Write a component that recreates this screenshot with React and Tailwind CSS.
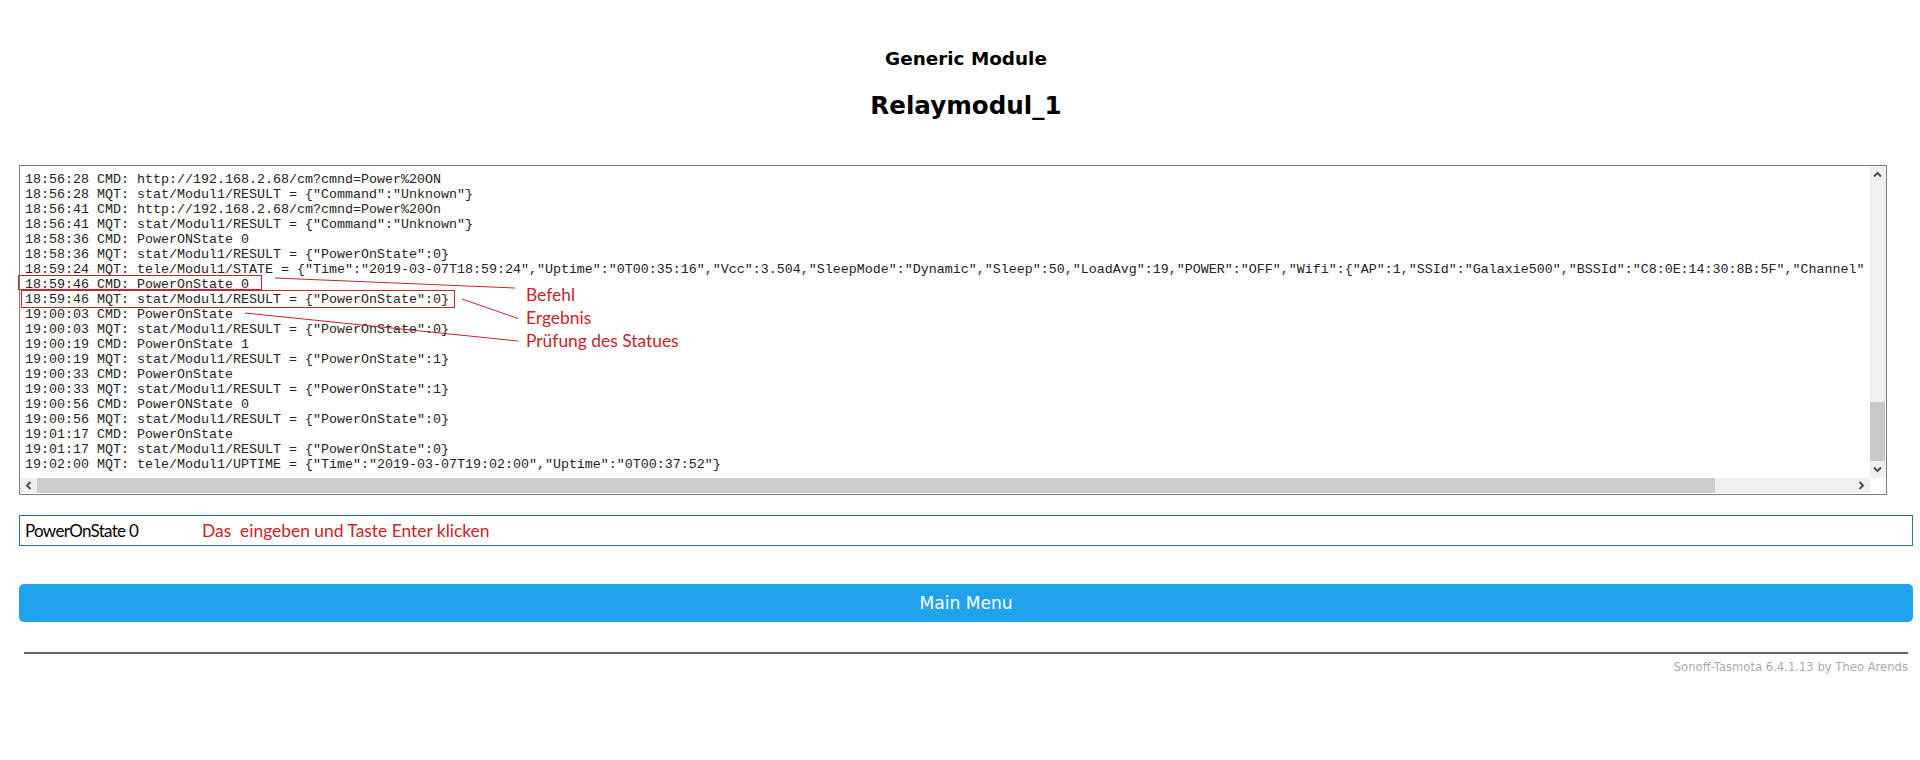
const lines = [
  '18:56:28 CMD: http://192.168.2.68/cm?cmnd=Power%20ON',
  '18:56:28 MQT: stat/Modul1/RESULT = {"Command":"Unknown"}',
  '18:56:41 CMD: http://192.168.2.68/cm?cmnd=Power%20On',
  '18:56:41 MQT: stat/Modul1/RESULT = {"Command":"Unknown"}',
  '18:58:36 CMD: PowerONState 0',
  '18:58:36 MQT: stat/Modul1/RESULT = {"PowerOnState":0}',
  '18:59:24 MQT: tele/Modul1/STATE = {"Time":"2019-03-07T18:59:24","Uptime":"0T00:35:16","Vcc":3.504,"SleepMode":"Dynamic","Sleep":50,"LoadAvg":19,"POWER":"OFF","Wifi":{"AP":1,"SSId":"Galaxie500","BSSId":"C8:0E:14:30:8B:5F","Channel"',
  '18:59:46 CMD: PowerOnState 0',
  '18:59:46 MQT: stat/Modul1/RESULT = {"PowerOnState":0}',
  '19:00:03 CMD: PowerOnState',
  '19:00:03 MQT: stat/Modul1/RESULT = {"PowerOnState":0}',
  '19:00:19 CMD: PowerOnState 1',
  '19:00:19 MQT: stat/Modul1/RESULT = {"PowerOnState":1}',
  '19:00:33 CMD: PowerOnState',
  '19:00:33 MQT: stat/Modul1/RESULT = {"PowerOnState":1}',
  '19:00:56 CMD: PowerONState 0',
  '19:00:56 MQT: stat/Modul1/RESULT = {"PowerOnState":0}',
  '19:01:17 CMD: PowerOnState',
  '19:01:17 MQT: stat/Modul1/RESULT = {"PowerOnState":0}',
  '19:02:00 MQT: tele/Modul1/UPTIME = {"Time":"2019-03-07T19:02:00","Uptime":"0T00:37:52"}',
];

function Chevron({ d }) {
  return (
    <svg width="9" height="9" viewBox="0 0 9 9" fill="none" stroke="#505050" strokeWidth="2">
      <path d={d} />
    </svg>
  );
}

export default function App() {
  return (
    <div className="relative min-h-[760px] bg-white text-black font-['DejaVu_Sans',sans-serif]">
      <div className="ml-[19px] w-[1894px] pt-[48px] text-center font-bold">
        <h3 className="text-[18.4px] leading-[22px]">Generic Module</h3>
        <h2 className="mt-[22px] text-[24.6px] leading-[28px]">Relaymodul_1</h2>
      </div>

      <div className="ml-[19px] mt-[45px] flex h-[330px] w-[1868px] flex-col border border-[#808080]">
        <div className="flex min-h-0 flex-1">
          <pre className="min-w-0 flex-1 overflow-hidden pl-[5px] pt-[6px] font-['Liberation_Mono',monospace] text-[13.33px] leading-[15px] text-[#222]">
            {lines.join('\n')}
          </pre>
          <div className="flex w-[16px] flex-col bg-[#f0f0f0] pr-px">
            <div className="flex h-[17px] items-center justify-center"><Chevron d="M1 6.5 4.5 3 8 6.5" /></div>
            <div className="flex-1" />
            <div className="h-[59px] bg-[#c8c8c8]" />
            <div className="flex h-[17px] items-center justify-center"><Chevron d="M1 2.5 4.5 6 8 2.5" /></div>
          </div>
        </div>
        <div className="flex h-[16px] pb-px">
          <div className="flex flex-1 bg-[#f0f0f0]">
            <div className="flex w-[17px] items-center justify-center"><Chevron d="M6.5 1 3 4.5 6.5 8" /></div>
            <div className="w-[1678px] bg-[#cdcdcd]" />
            <div className="flex-1" />
            <div className="flex w-[17px] items-center justify-center"><Chevron d="M2.5 1 6 4.5 2.5 8" /></div>
          </div>
          <div className="w-[16px] bg-white" />
        </div>
      </div>

      <div className="ml-[19px] mt-[20px] flex h-[31px] w-[1894px] items-center border border-[#2f7391] pl-[5px] pt-px font-['Lato',sans-serif]">
        <span className="w-[177px] text-[17px] tracking-[-0.7px]">PowerOnState 0</span>
        <span className="text-[17.4px] text-[#c8232c]">Das&nbsp; eingeben und Taste Enter klicken</span>
      </div>

      <button className="ml-[19px] mt-[38px] block h-[38px] w-[1894px] rounded-[5px] bg-[#1fa3ec] pt-[2px] text-[17.1px] text-white">
        Main Menu
      </button>

      <hr className="ml-[24px] mt-[30px] w-[1884px] border-t-2 border-[#666]" />
      <div className="mr-[12px] mt-[5px] text-right text-[11.6px] leading-[16px] text-[#aaa]">
        Sonoff-Tasmota 6.4.1.13 by Theo Arends
      </div>

      <svg className="pointer-events-none absolute left-0 top-0" width="1920" height="760" viewBox="0 0 1920 760" fill="none" stroke="#c8232c" strokeWidth="1">
        <rect x="18.5" y="275.5" width="243" height="14" />
        <rect x="21.5" y="290.5" width="433" height="17" />
        <path d="M275 278 515 288" />
        <path d="M462 299 518 318.5" />
        <path d="M245 313 518 341" />
      </svg>
      <div className="absolute left-[526px] top-[283px] font-['Lato',sans-serif] text-[17.4px] leading-[23px] text-[#c8232c]">
        <div>Befehl</div>
        <div>Ergebnis</div>
        <div>Prüfung des Statues</div>
      </div>
    </div>
  );
}
